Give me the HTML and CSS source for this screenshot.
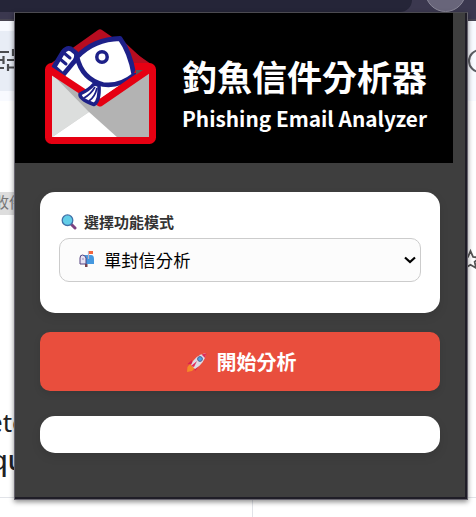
FILE: index.html
```html
<!DOCTYPE html>
<html lang="zh-Hant">
<head>
<meta charset="utf-8">
<title>釣魚信件分析器</title>
<link rel="stylesheet" href="styles.css">
</head>
<body>
<div class="backdrop">
  <div class="toolbar"><div class="omnibox"></div><div class="avatar"></div></div>
  <div class="strip"></div>
  <div class="pagehead"><div class="band"></div></div>
  <svg class="scene" width="476" height="517" viewBox="0 0 476 517">
    <path d="M0 52h9M0 60h4M3.500 56v8M0 68h4M13 49v7M7 60h8M7 67.500h8M8 64v7" fill="none" stroke="#4b4d50" stroke-width="2.200"/>
    <circle cx="480" cy="61" r="11" fill="none" stroke="#5c5e63" stroke-width="2"/>
    <path d="M470.500 251l2.600 6 6.400.6-4.900 4.200 1.500 6.200-5.600-3.300-5.400 3.300 1.400-6.200-4.800-4.200 6.300-.6z" fill="none" stroke="#555" stroke-width="1.800"/>
    <path d="M0 497.500H476M252.500 497V517" stroke="#e1e3e8"/>
  </svg>
  <span class="tag">收件</span>
  <span class="word one">ete</span>
  <span class="word two">qu</span>
</div>
<main class="popup">
  <header class="banner">
    <svg class="logo" width="112" height="118" viewBox="44 28 112 118">
      <path d="M50 64L98 30Q100 28.500 102 30L151 64L100 100Z" fill="#b70d20"/>
      <path d="M60 65L141 68L145 72L100 105Z" fill="#595757"/>
      <path d="M50 68H53L100 102L147 68H151V141H50Z" fill="#b3b3b3"/>
      <path d="M51 73L89 112L51 138Z" fill="#dcdedd"/>
      <path d="M51 138L89 112L118 138Z" fill="#fff"/>
      <path d="M72 62L63 75L84 90L100 99L122 83Z" fill="#fff"/>
      <rect x="48.500" y="66.500" width="104" height="74" rx="3" fill="none" stroke="#e60012" stroke-width="7"/>
      <path d="M57 62H132L122 84L100 99L84 90L63 75L57 70Z" fill="#fff"/>
      <path d="M60 62L65 50L75 54L96 39L120 39L135 75" fill="#b70d20"/>
      <path d="M77 56Q72 65 64 74L84 89L100 98L122 84Z" fill="#fff"/>
      <path d="M120 38L146 62H134Z" fill="#b70d20"/>
      <g stroke="#1d2088" stroke-width="4.800" stroke-linejoin="round" stroke-linecap="round">
        <path d="M54 67L63 52Q67 47 71 49L76 53Q78 58 73 63L63 75Z" fill="#fff"/>
        <path d="M64 53l6 5M60 59l6 5" fill="none" stroke-width="3"/>
        <path d="M77 57Q94 39 120 38.500Q130 52 134 75Q119 87 103 84.500Q82 79 77 57Z" fill="#fff"/>
        <circle cx="102" cy="57" r="5.200" fill="#fff" stroke-width="3.500"/>
      </g>
      <path d="M48.500 69L100 103L151 68" fill="none" stroke="#e60012" stroke-width="7" stroke-linejoin="round"/>
      <path d="M134 73L139 63H149L152 68L145 73Z" fill="#e60012"/>
      <path d="M136 70H143L136 75Z" fill="#595757"/>
      <path d="M94 84Q89 90 80 94Q79 99 94 104.500Q100 101 99 85Z" fill="#fff" stroke="#1d2088" stroke-width="3.500" stroke-linejoin="round"/>
      <path d="M95 87Q91 94 84 98M97 88Q95 97 89 101" fill="none" stroke="#1d2088" stroke-width="1.700"/>
    </svg>
    <div class="titles"><h1>釣魚信件分析器</h1><p>Phishing Email Analyzer</p></div>
  </header>
  <section class="card mode">
    <div class="label">
      <svg class="glass" width="16" height="16" viewBox="0 0 16 16"><path d="M10.500 10.500l3.500 3.500" stroke="#7d4381" stroke-width="3" stroke-linecap="round"/><circle cx="6.500" cy="6.200" r="5.300" fill="#62cde8" stroke="#4171a8" stroke-width="1.300"/></svg>
      <span>選擇功能模式</span>
    </div>
    <div class="select">
      <svg width="16" height="18" viewBox="0 0 16 18"><path d="M6 12h2.500v5H6z" fill="#75424d"/><path d="M3 5h9q3 0 3 4v5H1V8q0-3 2-3z" fill="#4598df"/><path d="M1 8q0-3 2.500-3T7 8v6H1z" fill="#e6e1f2" stroke="#54427f"/><path d="M9.500 9V1" stroke="#bfb3c5" stroke-width="1.200"/><path d="M10 1h4v3h-4z" fill="#f3663e"/><path d="M3 9h2" stroke="#9588b5"/></svg>
      <span>單封信分析</span>
      <svg class="chevron" width="12" height="8" viewBox="0 0 12 8"><path d="M1 1.500l5 4.500 5-4.500" fill="none" stroke="#000" stroke-width="2.200"/></svg>
    </div>
  </section>
  <button class="start">
    <svg width="22" height="22" viewBox="0 0 22 22"><path d="M6 9L1.500 13l5 1zM13 15l-4 5-1-5z" fill="#d91f4e"/><path d="M4 13l5 4-3 3-5 1 .5-5z" fill="#f58a28"/><path d="M5 14Q9 4 20 2Q19 12 9 18z" fill="#dedbe5"/><path d="M15.500 3.500L20.500 2L19 7z" fill="#e12c54"/><circle cx="14" cy="8" r="2.400" fill="#46a5e8" stroke="#57608d"/><path d="M5 15l6-5-3 6z" fill="#e32b59"/></svg>
    <span>開始分析</span>
  </button>
  <section class="card result"></section>
</main>
</body>
</html>
```
FILE: styles.css
```css
* { box-sizing: border-box; }
body { margin: 0; width: 476px; height: 517px; overflow: hidden; position: relative; background: #fff; font-family: "Noto Sans CJK TC", sans-serif; }
.backdrop { height: 517px; position: relative; overflow: hidden; }
.toolbar { height: 12px; background: #3b384f; position: relative; overflow: hidden; }
.omnibox { width: 412px; height: 12px; background: #252538; border-bottom-right-radius: 12px; }
.avatar { position: absolute; left: 425px; top: -29px; width: 41px; height: 41px; border-radius: 50%; background: #68657a; border: 1px solid #8b8999; }
.strip { height: 9px; background: #3b384f; border-bottom: 2px solid #484552; }
.pagehead { height: 80px; padding: 10px 0; background: #f8faff; }
.band { width: 15px; height: 60px; background: #e8edf6; }
.scene { position: absolute; left: 0; top: 0; }
.tag { position: absolute; left: -6px; top: 192px; height: 23px; line-height: 20px; font-size: 15px; background: #ddd; color: #777; }
.word { position: absolute; font-family: "Noto Sans", sans-serif; color: #202124; line-height: 34px; }
.one { left: -12px; top: 405px; font-size: 26px; }
.two { left: -9px; top: 443px; font-size: 27px; font-weight: 500; }
.popup { position: absolute; left: 14px; top: 12px; width: 454px; height: 488px; background: #3e3e3e; border: 1px solid #66636e; border-top-color: #4b4a50; box-shadow: inset -2px -2px #1f1d27, 0 2px 5px rgba(0,0,0,.45); }
.banner { width: 438px; height: 150px; background: #000; display: flex; padding: 15px 0 0 29px; color: #fff; }
.logo { flex: none; }
.titles { margin: 25px 0 0 26px; white-space: nowrap; }
h1 { margin: 0; font-size: 35px; line-height: 46px; font-weight: 700; }
.titles p { margin: 4px 0 0; font-size: 20.800px; line-height: 30px; font-weight: 700; }
.card { width: 400px; margin-left: 25px; background: #fff; border-radius: 15px; box-shadow: 0 4px 10px rgba(0,0,0,.1); }
.mode { margin-top: 29px; height: 121px; padding: 19px; }
.label { height: 22px; display: flex; align-items: center; gap: 7px; padding-left: 2px; color: #333; font-size: 15px; font-weight: 700; line-height: 22px; }
.select { margin-top: 5px; height: 44px; border: 1px solid #ccc; border-radius: 10px; background: #fcfcfc; padding: 0 4px 2px 19px; display: flex; align-items: center; font-size: 17.300px; color: #000; }
.select span { margin-left: 9px; }
.chevron { margin: 2px 0 0 auto; }
.start { display: flex; width: 400px; height: 59px; margin: 19px 0 0 25px; padding: 0 0 0 2px; border: 0; border-radius: 10px; background: #e94e3d; color: #fff; align-items: center; justify-content: center; gap: 9px; font: 700 20px "Noto Sans CJK TC", sans-serif; box-shadow: 0 3px 7px rgba(0,0,0,.1); }
.result { height: 37px; margin-top: 25px; }
```
